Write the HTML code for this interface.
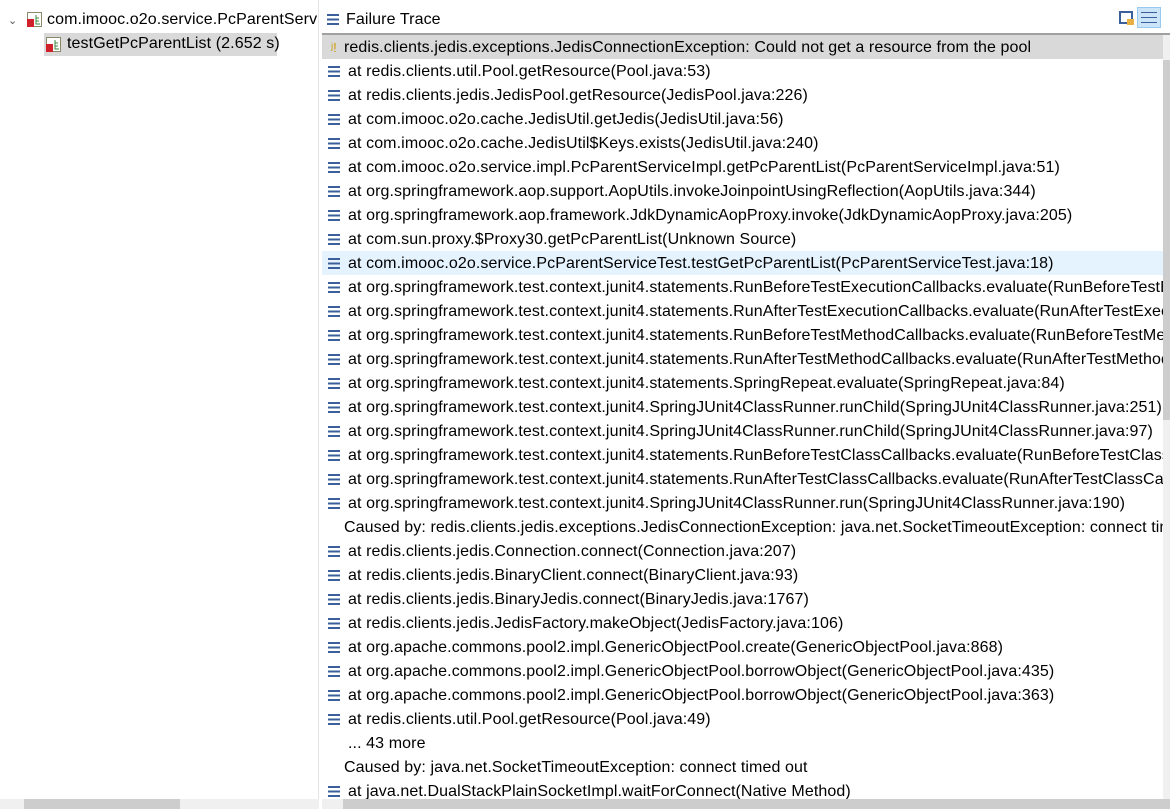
<!DOCTYPE html>
<html><head><meta charset="utf-8"><style>
*{margin:0;padding:0;box-sizing:border-box}
body{width:1170px;height:809px;overflow:hidden;background:#fff;font-family:"Liberation Sans","Noto Sans CJK SC",sans-serif;font-size:16px;letter-spacing:0.1px;color:#000;position:relative}
.abs{position:absolute;white-space:nowrap}
.row{position:absolute;left:322px;width:841px;height:24px;line-height:24px;white-space:nowrap;overflow:hidden}
.row .t{position:absolute;left:26px;top:1px}
.row .c{position:absolute;left:22px;top:1px}
.ic{position:absolute;left:6px;top:7px;width:12px;height:11px;background:linear-gradient(#3a5f9a 0 2px,transparent 2px 4.5px,#3a5f9a 4.5px 6.5px,transparent 6.5px 9px,#3a5f9a 9px 11px)}
</style></head><body>
<div class="abs" style="left:8px;top:14px;font-size:11px;color:#555">&#8964;</div>
<div class="abs" style="left:27px;top:12px;width:15px;height:15px">
<svg width="15" height="15"><rect x="0.5" y="0.5" width="14" height="14" fill="#fff" stroke="#8a8a6a"/><rect x="0" y="7" width="7" height="8" fill="#d0202a"/><path d="M9 3v9h4M9 6h3M9 9h3" stroke="#3a8a3a" fill="none"/></svg></div>
<div class="abs" style="left:47px;top:11px">com.imooc.o2o.service.PcParentServi</div>
<div class="abs" style="left:44px;top:33px;width:233px;height:23px;background:#d9d9d9"></div>
<div class="abs" style="left:46px;top:37px;width:15px;height:15px">
<svg width="15" height="15"><rect x="0.5" y="0.5" width="14" height="14" fill="#fff" stroke="#8a8a6a"/><rect x="0" y="7" width="7" height="8" fill="#d0202a"/><path d="M9 3v9h4M9 6h3M9 9h3" stroke="#3a8a3a" fill="none"/></svg></div>
<div class="abs" style="left:67px;top:35px">testGetPcParentList (2.652 s)</div>
<div class="abs" style="left:318px;top:0;width:4px;height:809px;background:#fff;border-left:1px solid #e4e4e4"></div>
<div class="abs" style="left:0;top:799px;width:319px;height:10px;background:#f0f0f0"></div>
<div class="abs" style="left:24px;top:799px;width:156px;height:10px;background:#cdcdcd"></div>
<div class="abs" style="left:322px;top:0;width:848px;height:34px;background:#fff"></div>
<div class="ic" style="left:327px;top:14px"></div>
<div class="abs" style="left:346px;top:11px">Failure Trace</div>
<div class="abs" style="left:1119px;top:11px;width:14px;height:13px;border:2px solid #3a5f9a;background:#fff"></div>
<div class="abs" style="left:1127px;top:19px;width:7px;height:6px;background:#e8b040"></div>
<div class="abs" style="left:1137px;top:7px;width:24px;height:21px;background:#cce4f7;border:1px solid #99c9ef"></div>
<div class="abs" style="left:1141px;top:12px;width:16px;height:11px;background:linear-gradient(#3a5f9a 0 1px,transparent 1px 5px,#3a5f9a 5px 6px,transparent 6px 10px,#3a5f9a 10px 11px)"></div>
<div class="abs" style="left:322px;top:33px;width:848px;height:2px;background:#a0a0a0"></div>
<div class="abs" style="left:1163px;top:35px;width:7px;height:764px;background:#f0f0f0"></div>
<div class="abs" style="left:1163px;top:60px;width:7px;height:360px;background:#cdcdcd"></div>
<div class="row" style="top:35px;background:#d9d9d9"><span class="abs" style="left:9px;top:1px;color:#c89a00;font-size:13px">&#x02B2;!</span><span class="c">redis.clients.jedis.exceptions.JedisConnectionException: Could not get a resource from the pool</span></div>
<div class="row" style="top:59px"><i class="ic"></i><span class="t">at redis.clients.util.Pool.getResource(Pool.java:53)</span></div>
<div class="row" style="top:83px"><i class="ic"></i><span class="t">at redis.clients.jedis.JedisPool.getResource(JedisPool.java:226)</span></div>
<div class="row" style="top:107px"><i class="ic"></i><span class="t">at com.imooc.o2o.cache.JedisUtil.getJedis(JedisUtil.java:56)</span></div>
<div class="row" style="top:131px"><i class="ic"></i><span class="t">at com.imooc.o2o.cache.JedisUtil$Keys.exists(JedisUtil.java:240)</span></div>
<div class="row" style="top:155px"><i class="ic"></i><span class="t">at com.imooc.o2o.service.impl.PcParentServiceImpl.getPcParentList(PcParentServiceImpl.java:51)</span></div>
<div class="row" style="top:179px"><i class="ic"></i><span class="t">at org.springframework.aop.support.AopUtils.invokeJoinpointUsingReflection(AopUtils.java:344)</span></div>
<div class="row" style="top:203px"><i class="ic"></i><span class="t">at org.springframework.aop.framework.JdkDynamicAopProxy.invoke(JdkDynamicAopProxy.java:205)</span></div>
<div class="row" style="top:227px"><i class="ic"></i><span class="t">at com.sun.proxy.$Proxy30.getPcParentList(Unknown Source)</span></div>
<div class="row" style="top:251px;background:#e5f3ff"><i class="ic"></i><span class="t">at com.imooc.o2o.service.PcParentServiceTest.testGetPcParentList(PcParentServiceTest.java:18)</span></div>
<div class="row" style="top:275px"><i class="ic"></i><span class="t">at org.springframework.test.context.junit4.statements.RunBeforeTestExecutionCallbacks.evaluate(RunBeforeTestExecutionCallbacks.java:73)</span></div>
<div class="row" style="top:299px"><i class="ic"></i><span class="t">at org.springframework.test.context.junit4.statements.RunAfterTestExecutionCallbacks.evaluate(RunAfterTestExecutionCallbacks.java:83)</span></div>
<div class="row" style="top:323px"><i class="ic"></i><span class="t">at org.springframework.test.context.junit4.statements.RunBeforeTestMethodCallbacks.evaluate(RunBeforeTestMethodCallbacks.java:75)</span></div>
<div class="row" style="top:347px"><i class="ic"></i><span class="t">at org.springframework.test.context.junit4.statements.RunAfterTestMethodCallbacks.evaluate(RunAfterTestMethodCallbacks.java:86)</span></div>
<div class="row" style="top:371px"><i class="ic"></i><span class="t">at org.springframework.test.context.junit4.statements.SpringRepeat.evaluate(SpringRepeat.java:84)</span></div>
<div class="row" style="top:395px"><i class="ic"></i><span class="t">at org.springframework.test.context.junit4.SpringJUnit4ClassRunner.runChild(SpringJUnit4ClassRunner.java:251)</span></div>
<div class="row" style="top:419px"><i class="ic"></i><span class="t">at org.springframework.test.context.junit4.SpringJUnit4ClassRunner.runChild(SpringJUnit4ClassRunner.java:97)</span></div>
<div class="row" style="top:443px"><i class="ic"></i><span class="t">at org.springframework.test.context.junit4.statements.RunBeforeTestClassCallbacks.evaluate(RunBeforeTestClassCallbacks.java:61)</span></div>
<div class="row" style="top:467px"><i class="ic"></i><span class="t">at org.springframework.test.context.junit4.statements.RunAfterTestClassCallbacks.evaluate(RunAfterTestClassCallbacks.java:70)</span></div>
<div class="row" style="top:491px"><i class="ic"></i><span class="t">at org.springframework.test.context.junit4.SpringJUnit4ClassRunner.run(SpringJUnit4ClassRunner.java:190)</span></div>
<div class="row" style="top:515px"><span class="c">Caused by: redis.clients.jedis.exceptions.JedisConnectionException: java.net.SocketTimeoutException: connect timed out</span></div>
<div class="row" style="top:539px"><i class="ic"></i><span class="t">at redis.clients.jedis.Connection.connect(Connection.java:207)</span></div>
<div class="row" style="top:563px"><i class="ic"></i><span class="t">at redis.clients.jedis.BinaryClient.connect(BinaryClient.java:93)</span></div>
<div class="row" style="top:587px"><i class="ic"></i><span class="t">at redis.clients.jedis.BinaryJedis.connect(BinaryJedis.java:1767)</span></div>
<div class="row" style="top:611px"><i class="ic"></i><span class="t">at redis.clients.jedis.JedisFactory.makeObject(JedisFactory.java:106)</span></div>
<div class="row" style="top:635px"><i class="ic"></i><span class="t">at org.apache.commons.pool2.impl.GenericObjectPool.create(GenericObjectPool.java:868)</span></div>
<div class="row" style="top:659px"><i class="ic"></i><span class="t">at org.apache.commons.pool2.impl.GenericObjectPool.borrowObject(GenericObjectPool.java:435)</span></div>
<div class="row" style="top:683px"><i class="ic"></i><span class="t">at org.apache.commons.pool2.impl.GenericObjectPool.borrowObject(GenericObjectPool.java:363)</span></div>
<div class="row" style="top:707px"><i class="ic"></i><span class="t">at redis.clients.util.Pool.getResource(Pool.java:49)</span></div>
<div class="row" style="top:731px"><span class="t">... 43 more</span></div>
<div class="row" style="top:755px"><span class="c">Caused by: java.net.SocketTimeoutException: connect timed out</span></div>
<div class="row" style="top:779px"><i class="ic"></i><span class="t">at java.net.DualStackPlainSocketImpl.waitForConnect(Native Method)</span></div>
<div class="abs" style="left:322px;top:799px;width:848px;height:10px;background:#f0f0f0"></div>
<div class="abs" style="left:343px;top:799px;width:827px;height:10px;background:#cdcdcd"></div>
</body></html>
